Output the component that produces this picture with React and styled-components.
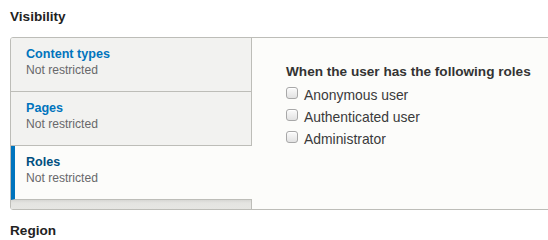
import React from "react";
import styled, { createGlobalStyle } from "styled-components";

const GlobalStyle = createGlobalStyle`
  html, body {
    margin: 0;
    padding: 0;
    background: #ffffff;
    overflow: hidden;
  }
  body {
    font-family: "Liberation Sans", Arial, sans-serif;
    color: #222222;
  }
`;

const Page = styled.div`
  width: 600px;
  padding: 9px 0 0 10px;
`;

const SectionTitle = styled.h2`
  margin: 0 0 12px;
  font-size: 13.6px;
  line-height: 16px;
  font-weight: bold;
  color: #222222;
`;

const NextTitle = styled(SectionTitle)`
  margin-top: 13px;
`;

const TabsBox = styled.div`
  display: flex;
  height: 171px;
  border: 1px solid #bdbdb8;
  border-radius: 3px;
  background: #fcfcfa;
  overflow: hidden;
`;

const TabMenu = styled.ul`
  display: flex;
  flex-direction: column;
  width: 240px;
  margin: 0;
  padding: 0;
  list-style: none;
  background: #f2f2f0;
  border-right: 1px solid #bdbdb8;
`;

const TabItem = styled.li`
  flex: none;
  box-sizing: border-box;
  height: 54px;
  padding: 8px 10px 0 ${(p) => (p.$selected ? "11px" : "15px")};
  border-bottom: 1px solid #bdbdb8;
  border-left: ${(p) => (p.$selected ? "4px solid #0074bd" : "0")};
  background: ${(p) => (p.$selected ? "#fcfcfa" : "transparent")};
  margin-right: ${(p) => (p.$selected ? "-1px" : "0")};
  cursor: pointer;
`;

const TabTitle = styled.div`
  font-size: 12.6px;
  line-height: 16px;
  font-weight: bold;
  color: ${(p) => (p.$selected ? "#004f80" : "#0074bd")};
`;

const TabSummary = styled.div`
  font-size: 12.1px;
  line-height: 16px;
  color: #68686a;
`;

const MenuFiller = styled.li`
  flex: 1;
  background: linear-gradient(#d6d6d3, #e4e4e1 3px, #e6e6e3);
`;

const Pane = styled.div`
  flex: 1;
  padding: 25px 0 0 34px;
`;

const PaneHeading = styled.div`
  font-size: 13.6px;
  line-height: 18px;
  font-weight: bold;
  color: #333333;
  margin-bottom: 3px;
`;

const OptionRow = styled.label`
  display: flex;
  align-items: flex-start;
  height: 22px;
  font-size: 13.9px;
  line-height: 22px;
  color: #3a3a3a;
`;

const Box = styled.span`
  flex: none;
  width: 10px;
  height: 10px;
  margin: 2.5px 6px 0 0;
  border: 1px solid #a8a8a8;
  border-radius: 3px;
  background: linear-gradient(#fbfbfb, #e2e2e2);
  box-shadow: inset 0 1px 0 #ffffff;
`;

const tabs = [
  { title: "Content types", summary: "Not restricted" },
  { title: "Pages", summary: "Not restricted" },
  { title: "Roles", summary: "Not restricted", selected: true },
];

const roles = ["Anonymous user", "Authenticated user", "Administrator"];

export default function App() {
  return (
    <>
      <GlobalStyle />
      <Page>
        <SectionTitle>Visibility</SectionTitle>
        <TabsBox>
          <TabMenu>
            {tabs.map((t) => (
              <TabItem key={t.title} $selected={t.selected}>
                <TabTitle $selected={t.selected}>{t.title}</TabTitle>
                <TabSummary>{t.summary}</TabSummary>
              </TabItem>
            ))}
            <MenuFiller />
          </TabMenu>
          <Pane>
            <PaneHeading>When the user has the following roles</PaneHeading>
            {roles.map((r) => (
              <OptionRow key={r}>
                <Box />
                {r}
              </OptionRow>
            ))}
          </Pane>
        </TabsBox>
        <NextTitle>Region</NextTitle>
      </Page>
    </>
  );
}
